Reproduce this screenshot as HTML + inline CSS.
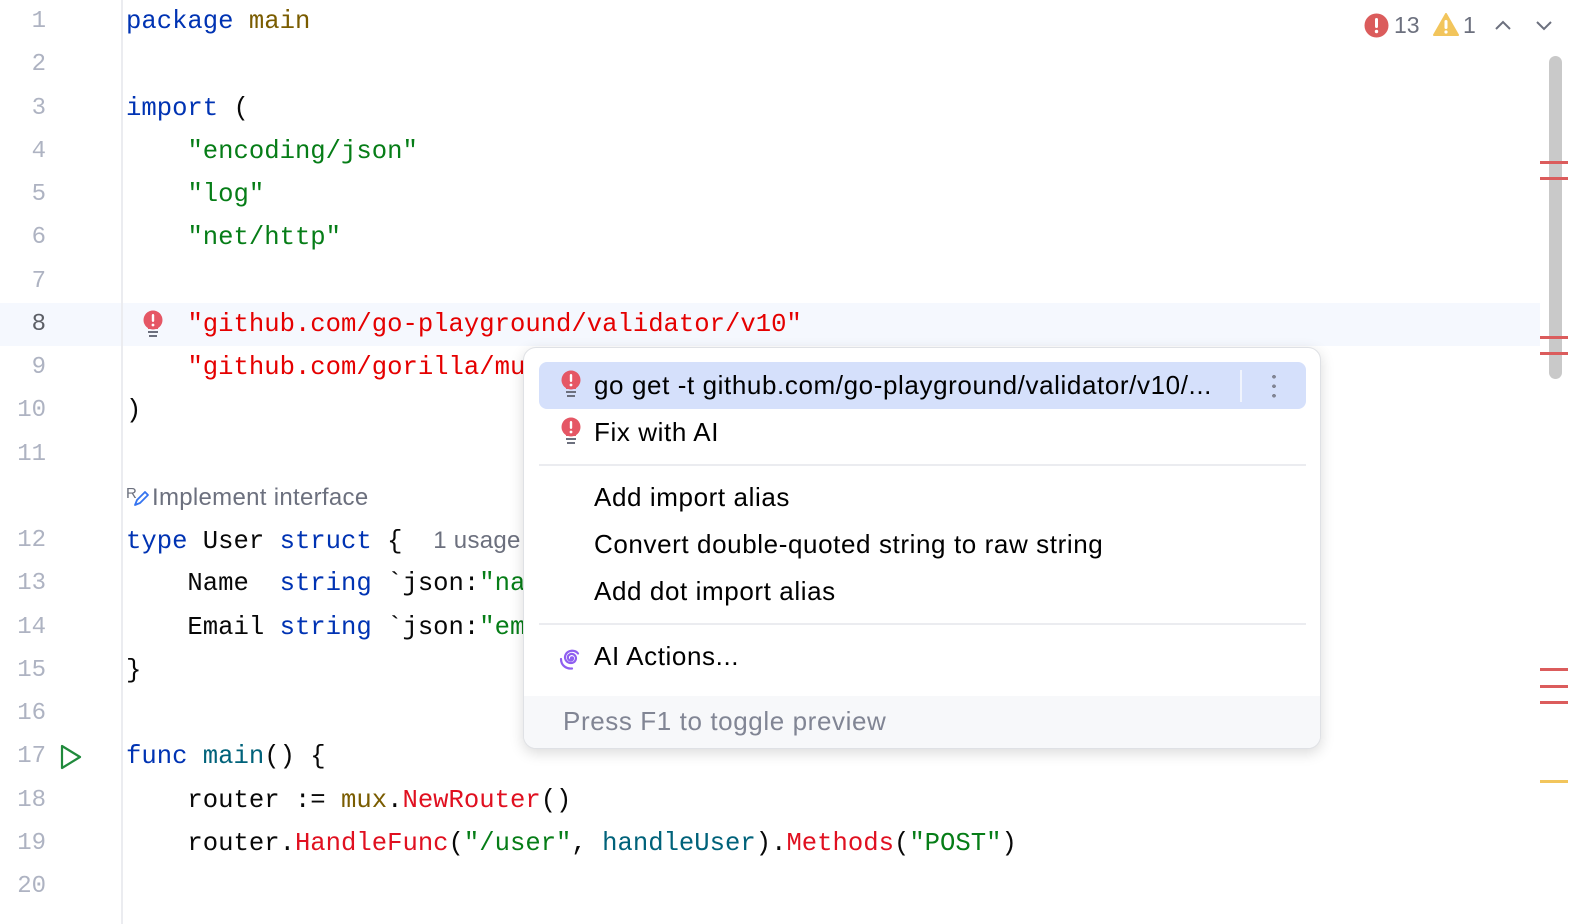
<!DOCTYPE html>
<html><head><meta charset="utf-8"><style>
*{margin:0;padding:0;box-sizing:border-box}
body{width:1596px;height:924px;background:#fff;position:relative;overflow:hidden;font-family:"Liberation Mono",monospace}
.gut{position:absolute;left:121px;top:0;width:2px;height:924px;background:#ebecf0}
.cur{position:absolute;left:0;top:303px;width:1540px;height:43px;background:#f5f8fe}
.rows{position:absolute;left:0;top:0;width:1540px}
.r{height:43.25px;line-height:43.25px;position:relative;font-size:25.6px;white-space:pre;color:#080808}
.n{position:absolute;left:0;width:46px;text-align:right;color:#aeb3c2;font-size:24px}
.c{position:absolute;left:126px}
.k{color:#0033b3}.s{color:#067d17}.e{color:#e50000}.p{color:#7a5c00}.f{color:#00627a}.m{color:#e01020}
.inl{font-family:"Liberation Sans",sans-serif;font-size:24px;color:#6c707e;letter-spacing:0.3px}
.pop{position:absolute;left:523px;top:347px;width:798px;height:402px;background:#fff;border:1px solid #dfe1e5;border-radius:13px;box-shadow:0 4px 14px rgba(0,0,0,.15);overflow:hidden;font-family:"Liberation Sans",sans-serif;font-size:26px;letter-spacing:0.6px;color:#000}
.it{position:absolute;left:70px;height:47px;line-height:47px;white-space:nowrap}
.sel{position:absolute;left:15px;top:14px;width:767px;height:47px;background:#d5e0fb;border-radius:8px}
.sep{position:absolute;left:15px;width:767px;height:2px;background:#ebecf0}
.foot{position:absolute;left:0;top:348px;width:798px;height:54px;background:#f7f8fa;color:#818594;line-height:50px;padding-left:39px}
.mark{position:absolute;left:1540px;width:28px;height:3px;background:#db5c5c}
</style></head><body>
<div class="cur"></div>
<div class="gut"></div>
<div class="rows">
<div class="r"><span class="n">1</span><span class="c"><span class="k">package</span> <span class="p">main</span></span></div>
<div class="r"><span class="n">2</span></div>
<div class="r"><span class="n">3</span><span class="c"><span class="k">import</span> (</span></div>
<div class="r"><span class="n">4</span><span class="c">    <span class="s">"encoding/json"</span></span></div>
<div class="r"><span class="n">5</span><span class="c">    <span class="s">"log"</span></span></div>
<div class="r"><span class="n">6</span><span class="c">    <span class="s">"net/http"</span></span></div>
<div class="r"><span class="n">7</span></div>
<div class="r"><span class="n" style="color:#5c5f66">8</span><span class="c">    <span class="e">"github.com/go-playground/validator/v10"</span></span>
<svg style="position:absolute;left:142px;top:7px" width="22" height="30" viewBox="0 0 22 30"><circle cx="11" cy="10" r="9.5" fill="#e55765"/><path d="M6 16h10v3H6z" fill="#e55765"/><rect x="9.8" y="4" width="2.4" height="8" rx="1.2" fill="#fff"/><circle cx="11" cy="15" r="1.4" fill="#fff"/><rect x="6" y="21" width="10" height="2" fill="#6c707e"/><rect x="7" y="25" width="8" height="2" fill="#6c707e"/></svg></div>
<div class="r"><span class="n">9</span><span class="c">    <span class="e">"github.com/gorilla/mux"</span></span></div>
<div class="r"><span class="n">10</span><span class="c">)</span></div>
<div class="r"><span class="n">11</span></div>
<div class="r"><span class="c inl"><svg style="vertical-align:-3px" width="26" height="24" viewBox="0 0 26 24"><text x="0" y="14" font-family="Liberation Sans" font-size="15" fill="#6c707e">R</text><path d="M9 21l2-5l8-8l3 3l-8 8z" fill="none" stroke="#3574f0" stroke-width="1.8" stroke-linejoin="round"/></svg>Implement interface</span></div>
<div class="r"><span class="n">12</span><span class="c"><span class="k">type</span> User <span class="k">struct</span> {  <span class="inl">1 usage</span></span></div>
<div class="r"><span class="n">13</span><span class="c">    Name  <span class="k">string</span> `json:<span class="s">"name"</span>`</span></div>
<div class="r"><span class="n">14</span><span class="c">    Email <span class="k">string</span> `json:<span class="s">"email"</span>`</span></div>
<div class="r"><span class="n">15</span><span class="c">}</span></div>
<div class="r"><span class="n">16</span></div>
<div class="r"><span class="n">17</span><svg style="position:absolute;left:59px;top:9px" width="24" height="26" viewBox="0 0 24 26"><path d="M3 2L21 13L3 24Z" fill="none" stroke="#208a3c" stroke-width="2.2" stroke-linejoin="round"/></svg><span class="c"><span class="k">func</span> <span class="f">main</span>() {</span></div>
<div class="r"><span class="n">18</span><span class="c">    router := <span class="p">mux</span>.<span class="m">NewRouter</span>()</span></div>
<div class="r"><span class="n">19</span><span class="c">    router.<span class="m">HandleFunc</span>(<span class="s">"/user"</span>, <span class="f">handleUser</span>).<span class="m">Methods</span>(<span class="s">"POST"</span>)</span></div>
<div class="r"><span class="n">20</span></div>
</div>

<div style="position:absolute;left:1364px;top:12px;font-family:'Liberation Sans',sans-serif;font-size:23px;color:#6c707e;white-space:nowrap">
<svg style="position:absolute;left:0;top:1px" width="25" height="25" viewBox="0 0 25 25"><circle cx="12.5" cy="12.5" r="12" fill="#db5c5c"/><rect x="11" y="5" width="3" height="10" rx="1.5" fill="#fff"/><circle cx="12.5" cy="18.5" r="1.7" fill="#fff"/></svg>
<span style="position:absolute;left:30px;top:0">13</span>
<svg style="position:absolute;left:69px;top:1px" width="26" height="24" viewBox="0 0 26 24"><path d="M13 1L25 22H1Z" fill="#f2c55c" stroke="#f2c55c" stroke-width="2" stroke-linejoin="round"/><rect x="11.5" y="7" width="3" height="9" rx="1.5" fill="#fff"/><circle cx="13" cy="19" r="1.6" fill="#fff"/></svg>
<span style="position:absolute;left:99px;top:0">1</span>
<svg style="position:absolute;left:129px;top:6px" width="20" height="14" viewBox="0 0 20 14"><path d="M3 11L10 4L17 11" fill="none" stroke="#6c707e" stroke-width="2"/></svg>
<svg style="position:absolute;left:170px;top:6px" width="20" height="14" viewBox="0 0 20 14"><path d="M3 4L10 11L17 4" fill="none" stroke="#6c707e" stroke-width="2"/></svg>
</div>
<div style="position:absolute;left:1549px;top:56px;width:13px;height:323px;background:#c9c9c9;border-radius:7px"></div>
<div class="mark" style="top:161px"></div><div class="mark" style="top:177px"></div>
<div class="mark" style="top:336px"></div><div class="mark" style="top:352px"></div>
<div class="mark" style="top:668px"></div><div class="mark" style="top:685px"></div><div class="mark" style="top:701px"></div>
<div class="mark" style="top:780px;background:#f2c55c"></div>

<div class="pop">
<div class="sel"></div>
<div style="position:absolute;left:716px;top:22px;width:2px;height:32px;background:#f0f4fd"></div>
<div style="position:absolute;left:748px;top:24px;width:4px;height:28px;background:radial-gradient(circle,#818594 1.8px,transparent 2px) 0 0/4px 9.5px"></div>
<svg style="position:absolute;left:36px;top:22px" width="22" height="30" viewBox="0 0 22 30"><circle cx="11" cy="10" r="9.5" fill="#e55765"/><path d="M6 16h10v3H6z" fill="#e55765"/><rect x="9.8" y="4" width="2.4" height="8" rx="1.2" fill="#fff"/><circle cx="11" cy="15" r="1.4" fill="#fff"/><rect x="6" y="21" width="10" height="2" fill="#6c707e"/><rect x="7" y="25" width="8" height="2" fill="#6c707e"/></svg>
<div class="it" style="top:14px">go get -t github.com/go-playground/validator/v10/...</div>
<svg style="position:absolute;left:36px;top:69px" width="22" height="30" viewBox="0 0 22 30"><circle cx="11" cy="10" r="9.5" fill="#e55765"/><path d="M6 16h10v3H6z" fill="#e55765"/><rect x="9.8" y="4" width="2.4" height="8" rx="1.2" fill="#fff"/><circle cx="11" cy="15" r="1.4" fill="#fff"/><rect x="6" y="21" width="10" height="2" fill="#6c707e"/><rect x="7" y="25" width="8" height="2" fill="#6c707e"/></svg>
<div class="it" style="top:61px">Fix with AI</div>
<div class="sep" style="top:116px"></div>
<div class="it" style="top:126px">Add import alias</div>
<div class="it" style="top:173px">Convert double-quoted string to raw string</div>
<div class="it" style="top:220px">Add dot import alias</div>
<div class="sep" style="top:275px"></div>
<svg style="position:absolute;left:34px;top:297px" width="26" height="26" viewBox="0 0 26 26"><path d="M13 13.5c0-1.5 2-1.5 2 0c0 2.5-4 2.8-5 0c-1-3.5 3.5-6 6.5-3.5c3 2.8 1 8-3.5 8c-5 0-7.5-5-5-9c2.5-4 9-4.5 12-.5M3 14c0 7 6 10 11 9.5" fill="none" stroke="#8f5ff0" stroke-width="2.2" stroke-linecap="round"/></svg>
<div class="it" style="top:285px">AI Actions...</div>
<div class="foot">Press F1 to toggle preview</div>
</div>
</body></html>
